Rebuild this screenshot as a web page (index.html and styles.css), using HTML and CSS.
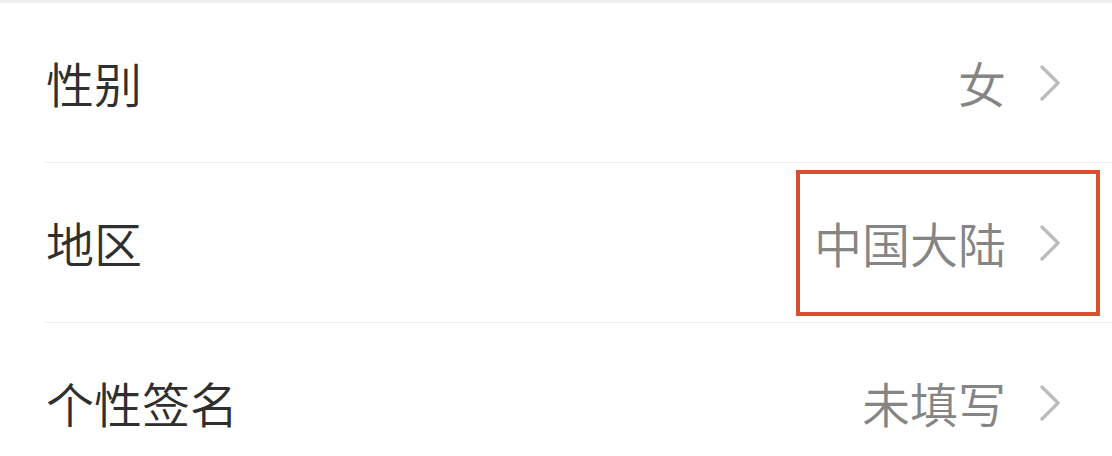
FILE: index.html
```html
<!DOCTYPE html>
<html lang="zh-CN">
<head>
<meta charset="utf-8">
<title>个人信息</title>
<link rel="stylesheet" href="styles.css">
</head>
<body>
<div class="topbar"></div>
<ul class="list">
  <li class="row">
    <span class="label">性别</span>
    <span class="value"><span class="value-text">女</span><svg class="arrow" viewBox="0 0 20 36" width="20" height="36"><polyline points="2,2 18,18 2,34" fill="none" stroke="#bdbdbd" stroke-width="3.5" stroke-linecap="round" stroke-linejoin="round"/></svg></span>
  </li>
  <li class="row">
    <span class="label">地区</span>
    <span class="value highlight"><span class="value-text">中国大陆</span><svg class="arrow" viewBox="0 0 20 36" width="20" height="36"><polyline points="2,2 18,18 2,34" fill="none" stroke="#bdbdbd" stroke-width="3.5" stroke-linecap="round" stroke-linejoin="round"/></svg></span>
  </li>
  <li class="row">
    <span class="label">个性签名</span>
    <span class="value"><span class="value-text">未填写</span><svg class="arrow" viewBox="0 0 20 36" width="20" height="36"><polyline points="2,2 18,18 2,34" fill="none" stroke="#bdbdbd" stroke-width="3.5" stroke-linecap="round" stroke-linejoin="round"/></svg></span>
  </li>
</ul>
</body>
</html>
```
FILE: styles.css
```css
html, body {
  margin: 0;
  padding: 0;
  background: #ffffff;
}
body {
  width: 1112px;
  height: 456px;
  overflow: hidden;
  font-family: "Noto Sans CJK SC", "Noto Sans", sans-serif;
}
.topbar {
  height: 3px;
  background: #efefef;
}
.list {
  list-style: none;
  margin: 0;
  padding: 0 0 0 45px;
}
.row {
  display: flex;
  align-items: center;
  justify-content: space-between;
  height: 159px;
  border-bottom: 1px solid #ececec;
  padding-right: 52px;
}
.label {
  font-size: 48px;
  font-weight: 350;
  line-height: 1.2;
  color: #2f2f2f;
  padding-left: 1px;
}
.value {
  display: flex;
  align-items: center;
  gap: 34px;
  position: relative;
}
.value-text {
  font-size: 48px;
  font-weight: 350;
  line-height: 1.2;
  color: #858585;
}
.arrow {
  display: block;
}
.highlight::after {
  content: "";
  position: absolute;
  left: -18px;
  right: -40px;
  top: 50%;
  height: 146px;
  transform: translateY(-50%);
  border: 4px solid #d9502f;
  box-sizing: border-box;
}
```
